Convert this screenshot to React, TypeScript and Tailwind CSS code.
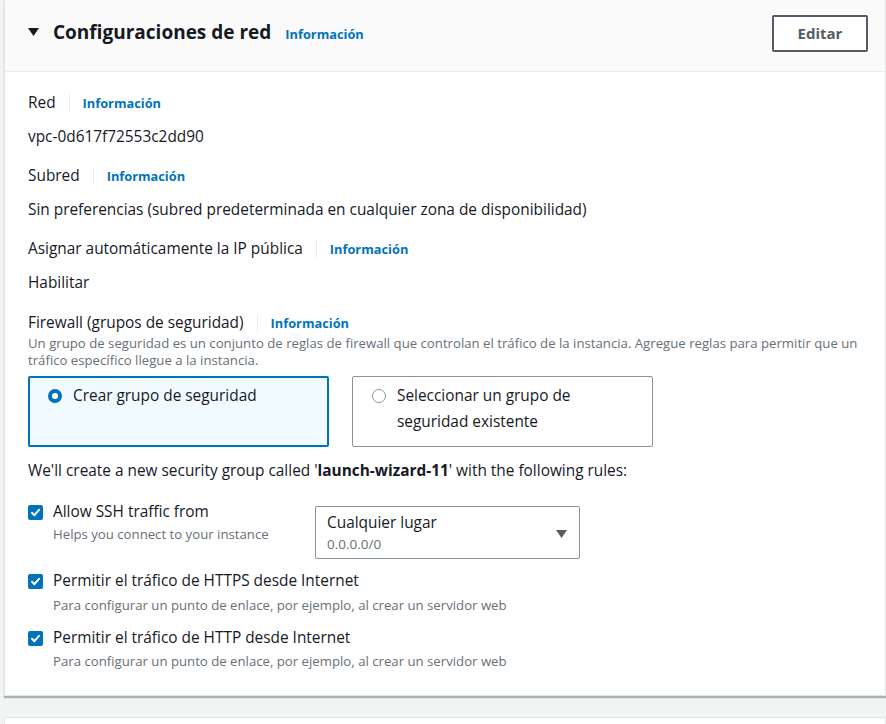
const font = { fontFamily: "'Open Sans', 'Noto Sans', sans-serif" };

function Info() {
  return <span className="text-[12.8px] font-bold text-[#0073bb] leading-[22px]">Información</span>;
}

function Label({ text }: { text: string }) {
  return (
    <div className="flex items-center h-[22px] text-[#16191f]">
      <span>{text}</span>
      <span className="mx-[13px] h-[18px] w-px bg-[#eaeded]" />
      <Info />
    </div>
  );
}

function Check() {
  return (
    <span className="mt-[4px] flex h-[15px] w-[15px] shrink-0 items-center justify-center rounded-[2px] bg-[#0073bb]">
      <svg width="11" height="11" viewBox="0 0 11 11" fill="none">
        <path d="M2 5.8L4.4 8.2L9 2.8" stroke="white" strokeWidth="2" strokeLinecap="round" strokeLinejoin="round" />
      </svg>
    </span>
  );
}

export default function App() {
  return (
    <div className="min-h-[724px] w-[886px] overflow-hidden bg-[#f2f3f3] pl-[4px]" style={font}>
      <div className="border border-t-0 border-[#e3e6e6] bg-white shadow-[0_2px_1px_rgba(0,28,36,0.3)]">
        {/* header */}
        <div className="flex h-[72px] items-start justify-between border-b border-[#eaeded] bg-[#fafafa] pl-[23px] pr-[17px]">
          <div className="mt-[19px] flex items-center">
            <svg width="11" height="8" viewBox="0 0 11 8" className="mr-[14px]">
              <path d="M0 0H11L5.5 8Z" fill="#16191f" />
            </svg>
            <h2 className="text-[19px] font-bold leading-[24px] text-[#16191f]">Configuraciones de red</h2>
            <span className="ml-[14px] mt-[2px]"><Info /></span>
          </div>
          <button className="mt-[15px] h-[37px] w-[96px] rounded-[2px] border-2 border-[#545b64] bg-white text-[15px] font-bold text-[#545b64]">
            Editar
          </button>
        </div>

        {/* body */}
        <div className="pl-[23px] pr-[10px] pt-[20px] pb-[25px] text-[15.4px] text-[#16191f]">
          <Label text="Red" />
          <p className="mt-[12px] leading-[22px]">vpc-0d617f72553c2dd90</p>
          <div className="mt-[17px]"><Label text="Subred" /></div>
          <p className="mt-[12px] leading-[22px]">Sin preferencias (subred predeterminada en cualquier zona de disponibilidad)</p>
          <div className="mt-[17px]"><Label text="Asignar automáticamente la IP pública" /></div>
          <p className="mt-[12px] leading-[22px]">Habilitar</p>
          <div className="mt-[18px]"><Label text="Firewall (grupos de seguridad)" /></div>
          <p className="mt-[1px] text-[13.2px] leading-[17px] text-[#687078]">
            Un grupo de seguridad es un conjunto de reglas de firewall que controlan el tráfico de la instancia. Agregue reglas para permitir que un tráfico específico llegue a la instancia.
          </p>

          <div className="mt-[7px] flex gap-[23px]">
            <div className="flex h-[71px] w-[301px] items-start rounded-[2px] border-2 border-[#0073bb] bg-[#f1faff] pl-[18px] pt-[5px]">
              <span className="mr-[11px] mt-[6px] h-[14px] w-[14px] shrink-0 rounded-full border-[4px] border-[#0073bb] bg-white" />
              <span className="leading-[26px]">Crear grupo de seguridad</span>
            </div>
            <div className="flex h-[71px] w-[301px] items-start rounded-[2px] border border-[#879596] bg-white pl-[19px] pt-[6px]">
              <span className="mr-[11px] mt-[6px] h-[14px] w-[14px] shrink-0 rounded-full border-[1.5px] border-[#879596] bg-white" />
              <span className="leading-[26px]">Seleccionar un grupo de<br />seguridad existente</span>
            </div>
          </div>

          <p className="mt-[13px] leading-[22px]">
            We'll create a new security group called '<b>launch-wizard-11</b>' with the following rules:
          </p>

          <div className="mt-[19px] flex items-start">
            <div className="flex w-[287px] gap-[10px]">
              <Check />
              <div>
                <p className="leading-[22px]">Allow SSH traffic from</p>
                <p className="mt-[2px] text-[13.2px] leading-[18px] text-[#687078]">Helps you connect to your instance</p>
              </div>
            </div>
            <div className="mt-[5px] flex h-[53px] w-[265px] items-center justify-between rounded-[2px] border border-[#879596] pl-[11px] pr-[12px]">
              <div>
                <p className="leading-[20px]">Cualquier lugar</p>
                <p className="mt-[2px] text-[13.5px] leading-[18px] text-[#687078]">0.0.0.0/0</p>
              </div>
              <svg width="11" height="8" viewBox="0 0 11 8" className="mt-[2px]">
                <path d="M0 0H11L5.5 8Z" fill="#545b64" />
              </svg>
            </div>
          </div>

          <div className="mt-[11px] flex gap-[10px]">
            <Check />
            <div>
              <p className="leading-[22px]">Permitir el tráfico de HTTPS desde Internet</p>
              <p className="mt-[4px] text-[13.2px] leading-[18px] text-[#687078]">Para configurar un punto de enlace, por ejemplo, al crear un servidor web</p>
            </div>
          </div>

          <div className="mt-[13px] flex gap-[10px]">
            <Check />
            <div>
              <p className="leading-[22px]">Permitir el tráfico de HTTP desde Internet</p>
              <p className="mt-[3px] text-[13.2px] leading-[18px] text-[#687078]">Para configurar un punto de enlace, por ejemplo, al crear un servidor web</p>
            </div>
          </div>
        </div>
      </div>

      <div className="mt-[21px] h-[40px] border border-[#e3e6e6] bg-white" />
    </div>
  );
}
